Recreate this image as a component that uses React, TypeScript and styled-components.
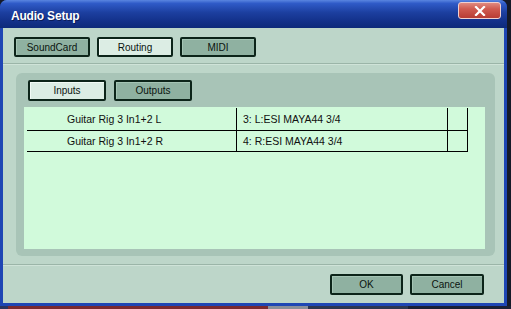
import React from "react";
import styled, { createGlobalStyle } from "styled-components";

const Global = createGlobalStyle`
  html, body { margin: 0; padding: 0; }
  body {
    width: 511px; height: 309px; overflow: hidden;
    background: #1c2030;
    font-family: "Liberation Sans", Arial, sans-serif;
  }
`;

const Screen = styled.div`
  width: 511px;
  height: 309px;
  display: flex;
  flex-direction: column;
  background: #151a28;
`;

const Window = styled.div`
  width: 507px;
  height: 306px;
  display: flex;
  flex-direction: column;
  background: #1e46b4;
  border-radius: 7px 7px 0 0;
  box-sizing: border-box;
  overflow: hidden;
`;

const TitleBar = styled.div`
  height: 28px;
  flex: none;
  display: flex;
  align-items: flex-start;
  justify-content: space-between;
  padding: 0 6px 0 11px;
  box-sizing: border-box;
  background: linear-gradient(to bottom, #5a86e0 0%, #2f5bc8 12%, #1c3f9f 45%, #13318a 75%, #0d2a7a 100%);
`;

const Title = styled.span`
  margin-top: 9px;
  color: #fff;
  font-weight: bold;
  font-size: 12px;
  line-height: 14px;
  letter-spacing: -0.2px;
  text-shadow: 1px 1px 0 #0a1c5a;
`;

const CloseButton = styled.div`
  width: 43px;
  height: 17px;
  margin-top: 2px;
  box-sizing: border-box;
  border: 1px solid #f0d0d0;
  border-radius: 3px;
  background: linear-gradient(to bottom, #e08a80 0%, #cf5a50 40%, #b83c34 100%);
  display: flex;
  align-items: center;
  justify-content: center;
`;

const Client = styled.div`
  flex: 1;
  margin: 0 3px 3px 3px;
  background: #bdd6c9;
  display: flex;
  flex-direction: column;
`;

const TabRow = styled.div`
  display: flex;
  gap: 7px;
  padding: 9px 0 0 11px;
  height: 20px;
`;

const Btn = styled.div<{ $active?: boolean; $w?: number; $h?: number }>`
  width: ${(p) => p.$w ?? 76}px;
  height: ${(p) => p.$h ?? 20}px;
  box-sizing: border-box;
  border: 2px solid #0c2419;
  border-radius: 2px;
  background: ${(p) => (p.$active ? "#dcede4" : "#8fb1a1")};
  box-shadow: inset 1px 1px 0 ${(p) => (p.$active ? "#f2fbf6" : "#a4c4b4")};
  display: flex;
  align-items: center;
  justify-content: center;
  font-size: 10px;
  color: #0a140f;
`;

const Rule = styled.div<{ $top: number }>`
  margin-top: ${(p) => p.$top}px;
  height: 1px;
  background: #9bb5a8;
  border-bottom: 1px solid #cfe3d8;
`;

const Panel = styled.div`
  margin: 8px 9px 0 13px;
  height: 183px;
  background: #a8c4b7;
  border-radius: 6px;
  display: flex;
  flex-direction: column;
  padding: 7px 10px 7px 8px;
  box-sizing: border-box;
`;

const SubTabRow = styled.div`
  display: flex;
  gap: 8px;
  padding-left: 4px;
  height: 20px;
`;

const ListArea = styled.div`
  margin-top: 7px;
  flex: 1;
  background: #d1fadb;
  padding: 1px 0 0 3px;
`;

const Row = styled.div<{ $h: number }>`
  display: grid;
  grid-template-columns: 210px 211px 20px;
  height: ${(p) => p.$h}px;
  width: 441px;
  border-bottom: 1px solid #000;
  box-sizing: border-box;
`;

const Cell = styled.div<{ $pad: number }>`
  border-right: 1px solid #000;
  padding-left: ${(p) => p.$pad}px;
  display: flex;
  align-items: center;
  font-size: 10.5px;
  color: #101010;
  white-space: nowrap;
`;

const Footer = styled.div`
  display: flex;
  justify-content: flex-end;
  gap: 7px;
  padding: 8px 20px 0 0;
`;

const BottomStrip = styled.div`
  flex: 1;
  display: flex;
`;

const StripBit = styled.div<{ $w: number; $c: string }>`
  width: ${(p) => p.$w}px;
  background: ${(p) => p.$c};
`;

export default function App() {
  return (
    <>
      <Global />
      <Screen>
        <Window>
          <TitleBar>
            <Title>Audio Setup</Title>
            <CloseButton>
              <svg width="12" height="10" viewBox="0 0 12 10">
                <path d="M2 1 L10 9 M10 1 L2 9" stroke="#fff" strokeWidth="2.2" strokeLinecap="square" />
              </svg>
            </CloseButton>
          </TitleBar>
          <Client>
            <TabRow>
              <Btn>SoundCard</Btn>
              <Btn $active>Routing</Btn>
              <Btn>MIDI</Btn>
            </TabRow>
            <Rule $top={6} />
            <Panel>
              <SubTabRow>
                <Btn $active $w={78} $h={21}>Inputs</Btn>
                <Btn $w={78} $h={21}>Outputs</Btn>
              </SubTabRow>
              <ListArea>
                <Row $h={23}>
                  <Cell $pad={40}>Guitar Rig 3 In1+2 L</Cell>
                  <Cell $pad={6}>3: L:ESI MAYA44 3/4</Cell>
                  <Cell $pad={0} />
                </Row>
                <Row $h={21}>
                  <Cell $pad={40}>Guitar Rig 3 In1+2 R</Cell>
                  <Cell $pad={6}>4: R:ESI MAYA44 3/4</Cell>
                  <Cell $pad={0} />
                </Row>
              </ListArea>
            </Panel>
            <Rule $top={8} />
            <Footer>
              <Btn $w={73} $h={21}>OK</Btn>
              <Btn $w={74} $h={21}>Cancel</Btn>
            </Footer>
          </Client>
        </Window>
        <BottomStrip>
          <StripBit $w={8} $c="#2a3560" />
          <StripBit $w={260} $c="#7a2a30" />
          <StripBit $w={40} $c="#8a8f9a" />
          <StripBit $w={100} $c="#2c3650" />
          <StripBit $w={103} $c="#1a2035" />
        </BottomStrip>
      </Screen>
    </>
  );
}
